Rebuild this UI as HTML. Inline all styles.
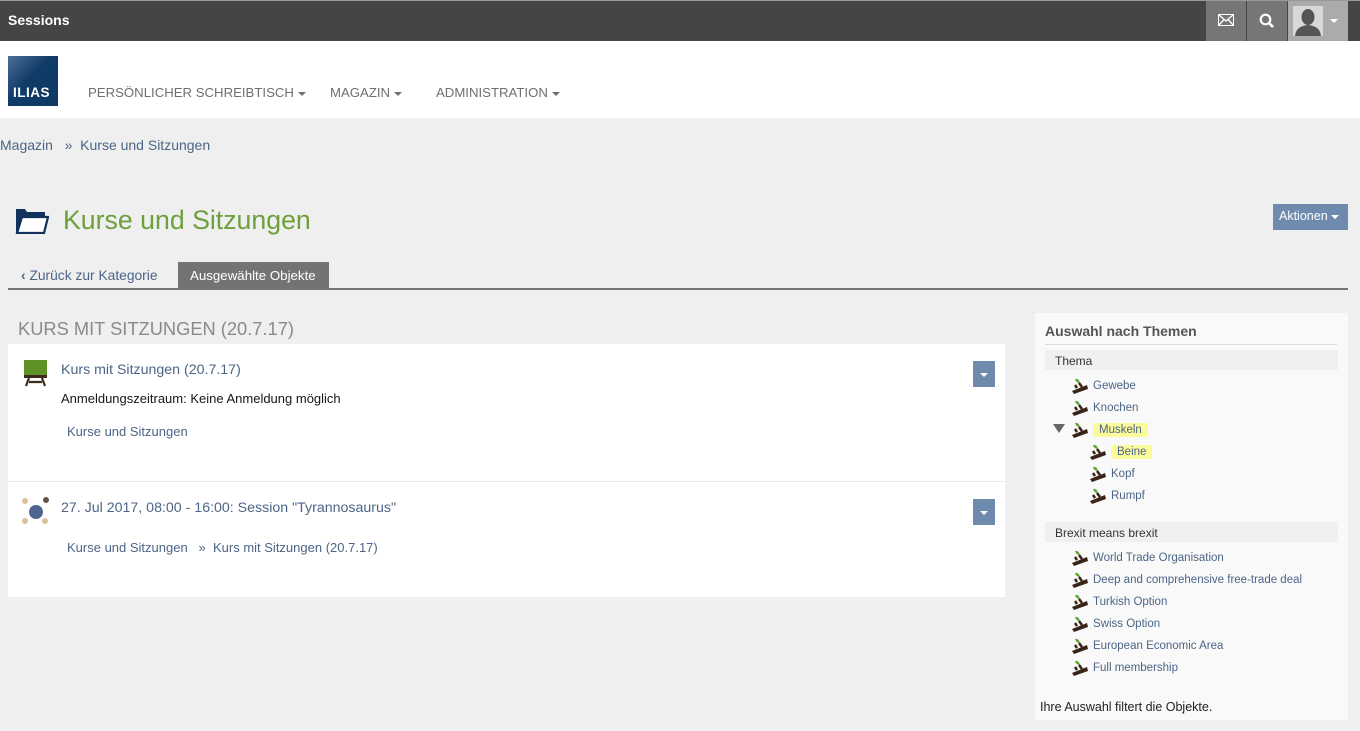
<!DOCTYPE html>
<html><head><meta charset="utf-8"><style>
*{margin:0;padding:0;box-sizing:border-box}
body{width:1360px;height:731px;overflow:hidden;background:#efefef;font-family:"Liberation Sans","DejaVu Sans",sans-serif;position:relative;color:#161616}
.a{position:absolute;white-space:nowrap}
.lk{color:#4c6586}
.tw{position:absolute;font-size:11.5px;color:#4c6586;white-space:nowrap}
.tw svg{position:absolute;left:-22px;top:-4px}
.car{display:inline-block;border-left:4px solid transparent;border-right:4px solid transparent;border-top:4px solid currentColor;vertical-align:middle;margin-left:4px}
</style></head><body>
<div class="a" style="left:0;top:0;width:1360px;height:41px;background:#454545;border-top:1px solid #999"></div>
<div class="a" style="left:8px;top:12px;color:#fff;font-weight:bold;font-size:14px">Sessions</div>
<div class="a" style="left:1206px;top:1px;width:40px;height:40px;background:#767676"></div>
<div class="a" style="left:1247px;top:1px;width:40px;height:40px;background:#767676"></div>
<div class="a" style="left:1288px;top:1px;width:60px;height:40px;background:#ababab"></div>
<svg class="a" style="left:1218px;top:14px" width="16" height="12" viewBox="0 0 16 12"><rect x="0.5" y="0.5" width="15" height="11" fill="none" stroke="#fff"/><path d="M0.5 0.5L8 7L15.5 0.5M0.5 11.5L6 5.5M15.5 11.5L10 5.5" fill="none" stroke="#fff" stroke-width="1.3"/></svg>
<svg class="a" style="left:1259px;top:13px" width="16" height="16" viewBox="0 0 16 16"><circle cx="6.5" cy="6.5" r="4.8" fill="none" stroke="#fff" stroke-width="2.2"/><path d="M10 10L14 14" stroke="#fff" stroke-width="2.6"/></svg>
<svg class="a" style="left:1293px;top:6px" width="30" height="30" viewBox="0 0 30 30"><rect width="30" height="30" fill="#d8d8d8"/><ellipse cx="15" cy="11" rx="6.5" ry="8" fill="#555"/><path d="M2 30Q3 20 15 19Q27 20 28 30Z" fill="#555"/></svg>
<div class="a" style="left:1330px;top:19px;border-left:4px solid transparent;border-right:4px solid transparent;border-top:4px solid #fff"></div>
<div class="a" style="left:0;top:41px;width:1360px;height:77px;background:#fff"></div>
<div class="a" style="left:8px;top:56px;width:50px;height:50px;background:linear-gradient(135deg,#4d6f99 0%,#0f3b66 45%,#0d3a64 100%);color:#fff;font-weight:bold;font-size:13.5px;padding:29px 0 0 5px;letter-spacing:0.5px">ILIAS</div>
<div class="a" style="left:88px;top:85px;font-size:13.2px;color:#6f6f6f">PERSÖNLICHER SCHREIBTISCH<span class="car"></span></div>
<div class="a" style="left:330px;top:85px;font-size:13.2px;color:#6f6f6f">MAGAZIN<span class="car"></span></div>
<div class="a" style="left:436px;top:85px;font-size:13.2px;color:#6f6f6f">ADMINISTRATION<span class="car"></span></div>
<div class="a lk" style="left:0;top:137px;font-size:14px">Magazin &nbsp;&nbsp;»&nbsp; Kurse und Sitzungen</div>
<svg class="a" style="left:15px;top:208px" width="34" height="26" viewBox="0 0 34 26"><path d="M1 1h9l2 3h18v4H7L3 24H1z" fill="#10325c"/><path d="M7 9h26l-4 16H2z" fill="#fff" stroke="#10325c" stroke-width="2.2"/></svg>
<div class="a" style="left:63px;top:205px;font-size:26.7px;color:#6ea03c">Kurse und Sitzungen</div>
<div class="a" style="left:1273px;top:204px;width:75px;height:26px;background:#6e8bae;color:#fff;font-size:12.5px;padding:5px 0 0 6px">Aktionen<span class="car" style="margin-left:3px"></span></div>
<div class="a lk" style="left:21px;top:268px;font-size:13.8px"><b>‹</b> Zurück zur Kategorie</div>
<div class="a" style="left:178px;top:262px;width:151px;height:27px;background:#737373;color:#fff;font-size:13.3px;padding:6px 0 0 12px">Ausgewählte Objekte</div>
<div class="a" style="left:8px;top:288px;width:1340px;height:2px;background:#737373"></div>
<div class="a" style="left:18px;top:318px;font-size:18.3px;color:#8a8a8a">KURS MIT SITZUNGEN (20.7.17)</div>
<div class="a" style="left:8px;top:344px;width:997px;height:253px;background:#fff"></div>
<div class="a" style="left:8px;top:481px;width:997px;height:1px;background:#e8e8e8"></div>
<svg class="a" style="left:24px;top:360px" width="24" height="27" viewBox="0 0 24 27"><rect x="0" y="0" width="23" height="15" fill="#5f9328"/><path d="M0 15h23v3H0z" fill="#3d2a1c"/><path d="M5 18L2 26M18 18L21 26M5 22h13" stroke="#3d2a1c" stroke-width="2.2"/></svg>
<div class="a lk" style="left:61px;top:362px;font-size:14.2px">Kurs mit Sitzungen (20.7.17)</div>
<div class="a" style="left:61px;top:391px;font-size:13px;color:#161616">Anmeldungszeitraum: Keine Anmeldung möglich</div>
<div class="a lk" style="left:67px;top:424px;font-size:13px">Kurse und Sitzungen</div>
<div class="a" style="left:973px;top:361px;width:22px;height:26px;background:#6e8bae"></div>
<div class="a" style="left:980px;top:373px;border-left:4px solid transparent;border-right:4px solid transparent;border-top:4px solid #fff"></div>
<svg class="a" style="left:22px;top:497px" width="28" height="28" viewBox="0 0 28 28"><circle cx="3" cy="4" r="3" fill="#dcbf9c"/><circle cx="24" cy="3" r="3" fill="#6b5447"/><circle cx="3" cy="24" r="3" fill="#dcbf9c"/><circle cx="23" cy="24" r="3" fill="#dcbf9c"/><circle cx="14" cy="15" r="7" fill="#4f6590"/></svg>
<div class="a lk" style="left:61px;top:500px;font-size:14.2px">27. Jul 2017, 08:00 - 16:00: Session "Tyrannosaurus"</div>
<div class="a lk" style="left:67px;top:540px;font-size:13px">Kurse und Sitzungen &nbsp;&nbsp;»&nbsp; Kurs mit Sitzungen (20.7.17)</div>
<div class="a" style="left:973px;top:499px;width:22px;height:26px;background:#6e8bae"></div>
<div class="a" style="left:980px;top:511px;border-left:4px solid transparent;border-right:4px solid transparent;border-top:4px solid #fff"></div>
<div class="a" style="left:1035px;top:313px;width:313px;height:407px;background:#f9f9f9"></div>
<div class="a" style="left:1045px;top:323px;font-size:14px;font-weight:bold;color:#555">Auswahl nach Themen</div>
<div class="a" style="left:1045px;top:344px;width:293px;height:1px;background:#ddd"></div>
<div class="a" style="left:1045px;top:350px;width:293px;height:20px;background:#f0f0f0;font-size:12px;color:#333;padding:4px 0 0 10px">Thema</div>
<div class="a" style="left:1045px;top:522px;width:293px;height:20px;background:#f0f0f0;font-size:12px;color:#333;padding:4px 0 0 10px">Brexit means brexit</div>
<div class="a" style="left:1053px;top:424px;border-left:6px solid transparent;border-right:6px solid transparent;border-top:9px solid #666"></div>
<svg width="0" height="0" style="position:absolute"><defs><g id="tr"><path d="M1 15L16 9L17 13L3 18Z" fill="#3a2418"/><path d="M6 12L4 9" stroke="#3a2418" stroke-width="2.5"/><path d="M4 3Q8 2 9 7Q5 7 4 3Z" fill="#5ca83a"/><path d="M8 7L11 11" stroke="#3a2418" stroke-width="2.5"/></g></defs></svg>
<div class="tw" style="left:1093px;top:380px"><svg width="20" height="20" viewBox="0 0 20 20"><use href="#tr"/></svg>Gewebe</div>
<div class="tw" style="left:1093px;top:402px"><svg width="20" height="20" viewBox="0 0 20 20"><use href="#tr"/></svg>Knochen</div>
<div class="tw" style="left:1093px;top:424px"><svg width="20" height="20" viewBox="0 0 20 20"><use href="#tr"/></svg><span style="background:#fbfb9b;padding:1px 6px">Muskeln</span></div>
<div class="tw" style="left:1111px;top:446px"><svg width="20" height="20" viewBox="0 0 20 20"><use href="#tr"/></svg><span style="background:#fbfb9b;padding:1px 6px">Beine</span></div>
<div class="tw" style="left:1111px;top:468px"><svg width="20" height="20" viewBox="0 0 20 20"><use href="#tr"/></svg>Kopf</div>
<div class="tw" style="left:1111px;top:490px"><svg width="20" height="20" viewBox="0 0 20 20"><use href="#tr"/></svg>Rumpf</div>
<div class="tw" style="left:1093px;top:552px"><svg width="20" height="20" viewBox="0 0 20 20"><use href="#tr"/></svg>World Trade Organisation</div>
<div class="tw" style="left:1093px;top:574px"><svg width="20" height="20" viewBox="0 0 20 20"><use href="#tr"/></svg>Deep and comprehensive free-trade deal</div>
<div class="tw" style="left:1093px;top:596px"><svg width="20" height="20" viewBox="0 0 20 20"><use href="#tr"/></svg>Turkish Option</div>
<div class="tw" style="left:1093px;top:618px"><svg width="20" height="20" viewBox="0 0 20 20"><use href="#tr"/></svg>Swiss Option</div>
<div class="tw" style="left:1093px;top:640px"><svg width="20" height="20" viewBox="0 0 20 20"><use href="#tr"/></svg>European Economic Area</div>
<div class="tw" style="left:1093px;top:662px"><svg width="20" height="20" viewBox="0 0 20 20"><use href="#tr"/></svg>Full membership</div>
<div class="a" style="left:1040px;top:700px;font-size:12.5px;color:#222">Ihre Auswahl filtert die Objekte.</div>
</body></html>
